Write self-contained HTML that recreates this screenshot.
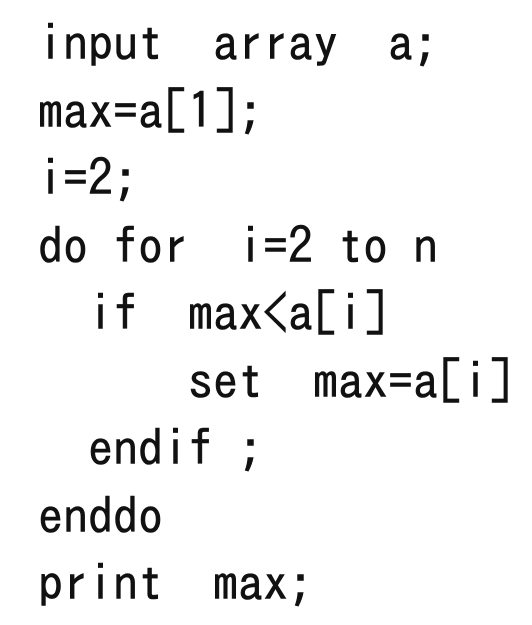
<!DOCTYPE html>
<html><head><meta charset="utf-8"><style>
html,body{margin:0;padding:0;background:#fff;width:532px;height:625px;overflow:hidden}
pre{position:absolute;left:38px;top:10px;margin:0;font-family:"IPAGothic","Liberation Mono",monospace;font-size:50px;line-height:67.5px;color:#111;white-space:pre;-webkit-text-stroke:0.6px #111}
</style></head><body>
<pre>input  array  a;
max=a[1];
i=2;
do for  i=2 to n
  if  max&lt;a[i]
      set  max=a[i]
  endif ;
enddo
print  max;</pre>
</body></html>
